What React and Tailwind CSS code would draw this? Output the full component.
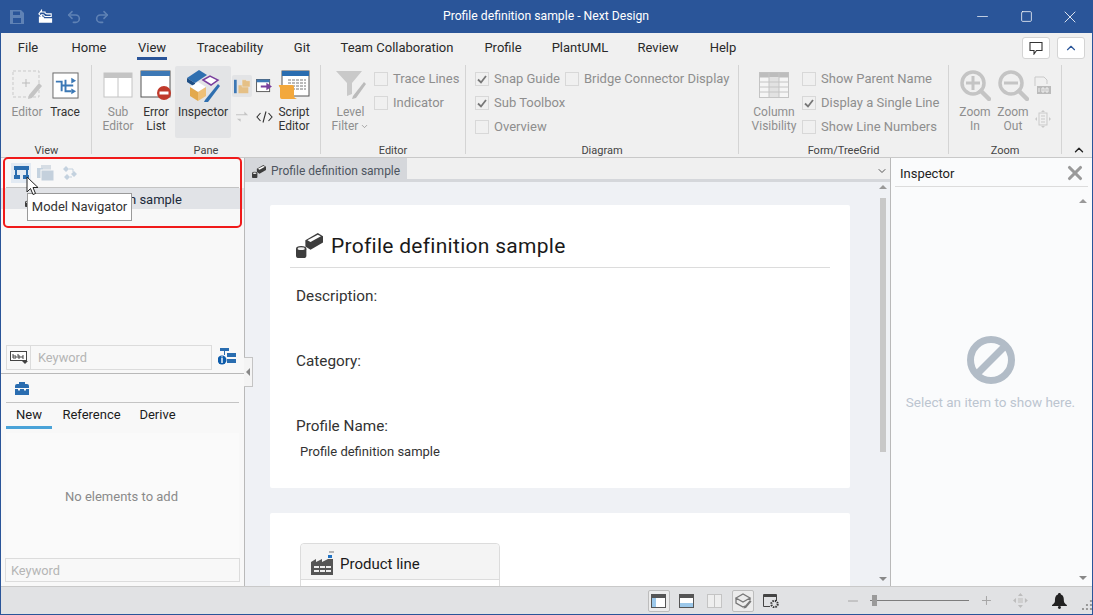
import { X, Minus, Square, ChevronUp, ChevronDown, Undo2, Redo2 } from 'lucide-react'

const tabs = [
  ['File', 'w-[54px]', false],
  ['Home', 'w-[68px]', false],
  ['View', 'w-[58px]', true],
  ['Traceability', 'w-[98px]', false],
  ['Git', 'w-[46px]', false],
  ['Team Collaboration', 'w-[144px]', false],
  ['Profile', 'w-[68px]', false],
  ['PlantUML', 'w-[86px]', false],
  ['Review', 'w-[70px]', false],
  ['Help', 'w-[60px]', false],
]

function Check({ label, checked, className = '' }) {
  return (
    <div className={`flex items-center gap-[5px] h-[24px] text-[#8e8e8e] text-[13px] whitespace-nowrap ${className}`}>
      <span className="w-[14px] h-[14px] border border-[#d8d8d8] bg-[#f0f0f0] flex items-center justify-center shrink-0">
        {checked && (
          <svg width="10" height="9" viewBox="0 0 10 9"><path d="M1 4.5 L4 7.5 L9 1" fill="none" stroke="#777" strokeWidth="1.8" /></svg>
        )}
      </span>
      {label}
    </div>
  )
}

function Group({ label, className, inner = '', children }) {
  return (
    <div className={`flex flex-col h-full border-r border-[#d4d4d4] shrink-0 ${className}`}>
      <div className={`flex-1 flex min-h-0 ${inner}`}>{children}</div>
      <div className="h-[14px] mb-[-4px] text-center text-[11px] leading-[14px] text-[#444]">{label}</div>
    </div>
  )
}

// ribbon button: 40px icon box, then one or two label lines
function Big({ icon, dim, className = '', children }) {
  return (
    <div className={`flex flex-col items-center shrink-0 ${className}`}>
      <div className="h-[40px] flex items-center justify-center">{icon}</div>
      <div className={`text-[12px] leading-[14px] text-center ${dim ? 'text-[#8e8e8e]' : 'text-[#333]'}`}>{children}</div>
    </div>
  )
}

function CubeIcon({ size = 16 }) {
  return (
    <svg width={size} height={size} viewBox="0 0 26 26">
      <path d="M9 9 L21 2 L26 5 L26 11 L14 18 L9 15 Z" fill="#3d3d3d" />
      <path d="M11 9 L21 3.5 L24 5 L14 10.5 Z" fill="#fff" />
      <ellipse cx="5" cy="17" rx="5" ry="2.5" fill="#3d3d3d" />
      <path d="M0 17 V24 A5 2.5 0 0 0 10 24 V17 Z" fill="#3d3d3d" />
      <ellipse cx="5" cy="17" rx="3.4" ry="1.4" fill="#eee" />
    </svg>
  )
}

function ArrowUp({ className = '' }) {
  return <span className={`w-0 h-0 border-x-[4px] border-x-transparent border-b-[4px] border-b-[#999] ${className}`} />
}

function ArrowDown({ className = '' }) {
  return <span className={`w-0 h-0 border-x-[4px] border-x-transparent border-t-[4px] border-t-[#888] ${className}`} />
}

function Ribbon() {
  return (
    <div className="h-[96px] flex bg-[#f0f0f0] border-b border-[#c9c9c9] pl-[1px] pt-[3px] pb-[3px] shrink-0">
      <Group label="View" className="w-[90px]">
        <Big
          dim
          className="w-[50px]"
          icon={
            <svg width="32" height="32" viewBox="0 0 32 32">
              <rect x="2" y="2" width="26" height="26" fill="none" stroke="#c9c9c9" strokeDasharray="3 2" />
              <path d="M15 10v8M11 14h8" stroke="#bbb" />
              <path d="M18 26 L28 14 L31 17 L21 29 L17 30 Z" fill="#c4c4c4" />
            </svg>
          }
        >
          Editor
        </Big>
        <Big
          className="w-[26px]"
          icon={
            <svg width="27" height="27" viewBox="0 0 28 28">
              <rect x="1" y="1" width="26" height="26" fill="#fff" stroke="#666" />
              <path d="M4 10h6v10M14 8v12h6M10 14h12" fill="none" stroke="#3b78b5" strokeWidth="2" />
              <path d="M20 6l5 3-5 3zM20 17l5 3-5 3z" fill="#3b78b5" />
            </svg>
          }
        >
          Trace
        </Big>
      </Group>
      <Group label="Pane" className="w-[229px]">
        <Big
          dim
          className="w-[50px] ml-[1px]"
          icon={
            <svg width="30" height="26" viewBox="0 0 30 26">
              <rect x="1" y="1" width="28" height="24" fill="#fff" stroke="#c4c4c4" />
              <rect x="1" y="1" width="28" height="5" fill="#c4c4c4" />
              <path d="M15 6v19" stroke="#c4c4c4" />
            </svg>
          }
        >
          Sub<br />Editor
        </Big>
        <Big
          className="w-[34px] ml-[-4px]"
          icon={
            <svg width="32" height="30" viewBox="0 0 32 30">
              <rect x="1" y="1" width="29" height="26" fill="#fff" stroke="#555" />
              <rect x="1" y="1" width="29" height="5" fill="#3d78b5" />
              <circle cx="24" cy="23" r="7" fill="#c0392b" />
              <rect x="19.5" y="21.5" width="9" height="3" fill="#fff" />
            </svg>
          }
        >
          Error<br />List
        </Big>
        <div className="w-[56px] h-[72px] ml-[2px] mt-[1px] bg-[#e3e4e6] rounded-[2px] flex flex-col items-center">
          <div className="h-[39px] flex items-center">
            <svg width="36" height="34" viewBox="0 0 36 34">
              <path d="M2 9 L14 1 L22 6 L10 14 Z" fill="#2f6fb0" />
              <path d="M2 9 L10 14 V18 L2 13 Z" fill="#1f4f85" />
              <path d="M18 11 L25 7 L33 11 L26 16 Z" fill="#fff" stroke="#7a3f9d" strokeWidth="1.5" />
              <path d="M5 18 L13 13 L21 18 L13 23 Z" fill="#fff" />
              <path d="M5 18 L13 23 V32 L5 27 Z" fill="#e3a94c" />
              <path d="M21 18 L13 23 V32 L21 27 Z" fill="#eec078" />
              <path d="M20 31 L33 15 L35 17 L23 33 L19 33 Z" fill="#2f6fb0" />
            </svg>
          </div>
          <div className="text-[12px] leading-[14px] text-[#333]">Inspector</div>
        </div>
        <div className="w-[46px] pt-[9px] flex flex-col shrink-0">
          <div className="flex items-center h-[24px] pl-[1px]">
            <span className="w-[20px] h-[22px] bg-[#e3e4e6] rounded-[2px] flex items-center justify-center">
              <svg width="17" height="17" viewBox="0 0 19 19">
                <rect x="0" y="2" width="3" height="15" fill="#3d78b5" />
                <path d="M5 8h5l1 1h5v8H5z" fill="#e5c086" />
                <path d="M9 2h4l1 1h4v7H9z" fill="#e5c086" stroke="#f0f0f0" strokeWidth=".5" />
              </svg>
            </span>
            <svg width="17" height="14" viewBox="0 0 18 15" className="ml-[4px]">
              <rect x=".5" y=".5" width="14" height="13" fill="#fff" stroke="#555" />
              <rect x=".5" y=".5" width="14" height="3" fill="#3d78b5" />
              <path d="M5 7h6V4l6 4-6 4V9H5z" fill="#7a3f9d" />
            </svg>
          </div>
          <div className="flex items-center h-[24px] mt-[7px] pl-[5px]">
            <svg width="13" height="14" viewBox="0 0 14 14"><path d="M0 4h9V1l4 4H0zM14 9H5v3L1 9h13z" fill="#c4c4c4" /></svg>
            <svg width="17" height="12" viewBox="0 0 17 12" className="ml-[7px]"><path d="M4.500 2 L1 6 L4.500 10 M12.500 2 L16 6 L12.500 10 M10 0.500 L7 11.500" fill="none" stroke="#333" strokeWidth="1.1" /></svg>
          </div>
        </div>
        <Big
          className="w-[36px] ml-[-1px]"
          icon={
            <svg width="32" height="30" viewBox="0 0 32 30">
              <rect x="4" y="1" width="27" height="25" fill="#fff" stroke="#555" />
              <rect x="4" y="1" width="27" height="5" fill="#2a6db0" />
              <path d="M10 10h18M10 13h18M10 16h18M10 19h18" stroke="#777" strokeDasharray="3 1" />
              <path d="M1 15h13c2 0 2 2 2 3v8c0 2 2 2 3 3H4c-2 0-2-2-2-3v-8c0-1-2-2-1-3z" fill="#f3a83c" />
            </svg>
          }
        >
          Script<br />Editor
        </Big>
      </Group>
      <Group label="Editor" className="w-[145px]">
        <Big
          dim
          className="w-[53px] pl-[6px]"
          icon={
            <svg width="32" height="30" viewBox="0 0 32 30">
              <path d="M1 1h26L17 13v11l-5 2V13z" fill="#c9c9c9" />
              <path d="M18 26 L29 12 L31 14 L21 28 L17 29 Z" fill="#bbb" />
            </svg>
          }
        >
          Level<br /><span className="inline-flex items-center gap-[2px]">Filter<ChevronDown size={9} /></span>
        </Big>
        <div className="flex flex-col pt-[2px]">
          <Check label="Trace Lines" />
          <Check label="Indicator" />
        </div>
      </Group>
      <Group label="Diagram" className="w-[273px]" inner="pl-[9px]">
        <div className="flex flex-col pt-[2px]">
          <div className="flex gap-[5px]">
            <Check label="Snap Guide" checked />
            <Check label="Bridge Connector Display" />
          </div>
          <Check label="Sub Toolbox" checked />
          <Check label="Overview" />
        </div>
      </Group>
      <Group label="Form/TreeGrid" className="w-[210px]" inner="pl-[9px]">
        <Big
          dim
          className="w-[52px] mr-[2px]"
          icon={
            <svg width="30" height="26" viewBox="0 0 30 26">
              <rect x=".5" y=".5" width="29" height="25" fill="#f5f5f5" stroke="#c4c4c4" />
              <rect x=".5" y=".5" width="29" height="5" fill="#bdbdbd" />
              <rect x="10" y="5" width="10" height="20" fill="#e2e2e2" />
              <path d="M10 1v24M20 1v24M1 10h28M1 15h28M1 20h28" stroke="#c4c4c4" />
            </svg>
          }
        >
          Column<br />Visibility
        </Big>
        <div className="flex flex-col pt-[2px]">
          <Check label="Show Parent Name" />
          <Check label="Display a Single Line" checked />
          <Check label="Show Line Numbers" />
        </div>
      </Group>
      <Group label="Zoom" className="w-[113px]" inner="pl-[7px]">
        {[['In', 'M8 15h14M15 8v14'], ['Out', 'M8 15h14']].map(([t, d]) => (
          <Big
            key={t}
            dim
            className="w-[38px]"
            icon={
              <svg width="32" height="32" viewBox="0 0 32 32">
                <circle cx="14" cy="14" r="11" fill="none" stroke="#c4c4c4" strokeWidth="3.5" />
                <path d={d} transform="translate(-1 -1)" stroke="#c4c4c4" strokeWidth="3" />
                <path d="M22 22l8 8" stroke="#c4c4c4" strokeWidth="4.500" strokeLinecap="round" />
              </svg>
            }
          >
            Zoom<br />{t}
          </Big>
        ))}
        <div className="flex flex-col items-center gap-[16px] pt-[11px] ml-[2px]">
          <svg width="17" height="18" viewBox="0 0 17 18">
            <path d="M1 10V1h9l3 3v4" fill="none" stroke="#c9c9c9" />
            <rect x="3" y="10" width="14" height="8" fill="#bbb" />
            <path d="M5 12v4M8 12h2v4H8zM12 12h2v4h-2z" fill="none" stroke="#f0f0f0" />
          </svg>
          <svg width="16" height="18" viewBox="0 0 16 18">
            <rect x="4" y="3" width="8" height="12" fill="none" stroke="#c9c9c9" />
            <path d="M6 6h4M6 9h4M6 12h4" stroke="#c9c9c9" />
            <path d="M2 7L0 9l2 2zM14 7l2 2-2 2zM6 2l2-2 2 2zM6 16l2 2 2-2z" fill="#c9c9c9" />
          </svg>
        </div>
      </Group>
      <div className="flex-1 flex items-end justify-end pr-[6px] mb-[-3px]"><ChevronUp size={14} strokeWidth={2.4} className="text-[#222]" /></div>
    </div>
  )
}

function LeftPanel() {
  return (
    <div className="w-[244px] shrink-0 border-r border-[#b9b9b9] bg-[#f8f8f8] flex flex-col relative">
      <div className="h-[30px] mx-[5px] flex items-center pl-[5px] border-b border-[#c4c4c4] shrink-0">
        <span className="w-[20px] h-[20px] bg-[#e2eaf3] flex items-center justify-center">
          <svg width="15" height="13" viewBox="0 0 15 13"><path d="M0 0h15v4H0zM1 4h2v5H1zM12 4h2v5h-2z" fill="#2a6db0" /><path d="M0 9h6v4H0zM9 9h6v4H9z" fill="#2a6db0" /></svg>
        </span>
        <svg width="17" height="16" viewBox="0 0 17 16" className="ml-[6px]"><rect x="4" y="0" width="10" height="9" fill="#d6dde4" /><rect x="0" y="3" width="6" height="10" fill="#c4d2df" /><rect x="4" y="5" width="13" height="11" fill="#c4d0dc" stroke="#f8f8f8" /></svg>
        <svg width="16" height="16" viewBox="0 0 16 16" className="ml-[8px]"><path d="M4 1l3 3-3 3-3-3zM12 6l3 3-3 3-3-3zM5 9l3 3-3 3-3-3z" fill="#c4d2df" /><path d="M7 4h4v3M8 12h2" stroke="#c4d2df" fill="none" /></svg>
      </div>
      <div className="h-[21px] bg-[#e1e3e7] flex items-center pl-[24px] pt-[3px] gap-[3px] text-[13px] text-[#1c2a3a] shrink-0">
        <CubeIcon size={14} />
        Profile definition sample
      </div>
      <div className="flex-1" />
      <div className="h-[25px] mx-[5px] flex gap-[6px] shrink-0">
        <div className="w-[206px] border border-[#dcdcdc] flex items-center">
          <span className="w-[24px] h-full border-r border-[#dcdcdc] flex items-center justify-center">
            <svg width="18" height="13" viewBox="0 0 18 13"><rect x=".5" y=".5" width="16" height="9" fill="#fff" stroke="#444" /><path d="M3 3v4M3 5h3v2H3M8 3v4h2V5H8M14 5h-2v2h2" fill="none" stroke="#444" /><path d="M12 10h6l-3 3z" fill="#444" /></svg>
          </span>
          <span className="pl-[7px] pt-[1px] text-[12.8px] text-[#b5b5b5]">Keyword</span>
        </div>
        <svg width="18" height="17" viewBox="0 0 18 17" className="mt-[3px]">
          <path d="M2 0h9v3H7v4H6V3H2z" fill="#2a6db0" />
          <rect x="9" y="5" width="9" height="4" fill="#2a6db0" />
          <rect x="9" y="11" width="9" height="4" fill="#2a6db0" />
          <circle cx="4" cy="12" r="4.500" fill="#0d5cab" />
          <rect x="3.300" y="10" width="1.400" height="5" fill="#fff" />
          <rect x="3.300" y="8.400" width="1.400" height="1" fill="#fff" />
        </svg>
      </div>
      <div className="h-[1px] bg-[#b9b9b9] mt-[3px] shrink-0" />
      <div className="h-[29px] mx-[5px] border-b border-[#c4c4c4] flex items-center pl-[9px] pt-[1px] shrink-0">
        <svg width="14" height="13" viewBox="0 0 14 13"><path d="M0 4Q0 2 2 2H4V0H10V2H12Q14 2 14 4V6H0z" fill="#2a6db0" /><path d="M0 7H3V8.500H5V7H9V8.500H11V7H14V13H0z" fill="#2a6db0" /></svg>
      </div>
      <div className="h-[26px] mx-[5px] flex text-[13px] text-[#1c1c1c] shrink-0">
        <div className="w-[46px] text-center leading-[23px] border-b-[3px] border-[#4aa3d8]">New</div>
        <div className="w-[79px] text-center leading-[23px]">Reference</div>
        <div className="w-[53px] text-center leading-[23px]">Derive</div>
      </div>
      <div className="h-[4px] shrink-0" />
      <div className="flex-[0_0_125px] mx-[5px] bg-[#fafafa] flex items-center justify-center pr-[2px] pt-[2px] text-[13px] text-[#8a8a8a]">No elements to add</div>
      <div className="h-[24px] mx-[4px] mb-[4px] border border-[#dcdcdc] pl-[5px] text-[12.8px] leading-[23px] text-[#b5b5b5] shrink-0">Keyword</div>

      <div className="absolute left-[26px] top-[35px] w-[105px] h-[28px] bg-white border border-[#9a9a9a] flex items-center justify-center text-[13px] text-[#333] z-10">Model Navigator</div>
      <div className="absolute left-[2px] top-[-1px] w-[239px] h-[71px] rounded-[5px] border-[2px] border-[#f01a1a] z-20" />
      <svg width="14" height="21" viewBox="0 0 14 21" className="absolute left-[25px] top-[18px] z-30">
        <path d="M1 1 V16 L4.500 12.500 L7 18.500 L9.500 17.500 L7 11.500 H12 Z" fill="#fff" stroke="#222" strokeWidth="1" />
      </svg>
      <div className="absolute left-[243px] top-[199px] w-[9px] h-[30px] bg-[#f4f4f4] border border-l-0 border-[#c4c4c4] flex items-center justify-center z-10">
        <span className="w-0 h-0 border-y-[4px] border-y-transparent border-r-[4px] border-r-[#888]" />
      </div>
    </div>
  )
}

function DocPane() {
  return (
    <div className="flex-1 min-w-0 flex flex-col bg-[#eff1f5]">
      <div className="h-[21px] flex bg-[#f0f0f0] shrink-0">
        <div className="w-[162px] bg-[#d5d7db] flex items-center pl-[7px] pt-[5px] gap-[5px] text-[12px] text-[#4d5560]">
          <CubeIcon size={14} />
          Profile definition sample
        </div>
        <div className="flex-1 flex items-center justify-end pr-[2px] pt-[4px]"><ChevronDown size={12} className="text-[#555]" /></div>
      </div>
      <div className="h-[3px] bg-[#d5d7db] shrink-0" />
      <div className="flex-1 min-h-0 flex">
        <div className="flex-1 min-w-0 pl-[25px] pr-[25px] pt-[23px] flex flex-col gap-[25px] overflow-hidden">
          <div className="h-[283px] shrink-0 bg-white rounded-[2px] px-[20px] pt-[26px]">
            <div className="h-[37px] flex items-start gap-[8px] pl-[6px] border-b border-[#dcdcdc]">
              <CubeIcon size={27} />
              <span className="text-[21px] leading-[31px] text-[#1a1a1a] tracking-[0.28px]">Profile definition sample</span>
            </div>
            <div className="pl-[6px] pt-[18px] text-[15.3px] text-[#333] leading-[20px]">
              <div className="h-[65px]">Description:</div>
              <div className="h-[65px]">Category:</div>
              <div>Profile Name:</div>
              <div className="pl-[4px] pt-[7px] text-[13px] leading-[18px] text-[#333]">Profile definition sample</div>
            </div>
          </div>
          <div className="flex-1 shrink-0 bg-white rounded-[2px] pl-[30px] pt-[30px] min-h-[80px]">
            <div className="w-[200px] h-[60px] border border-[#dcdcdc] rounded-[4px]">
              <div className="h-[36px] bg-[#f4f4f4] border-b border-[#dcdcdc] rounded-t-[4px] flex items-center pl-[9px] gap-[5px] pt-[2px] text-[15px] text-[#1a1a1a]">
                <svg width="25" height="24" viewBox="0 0 25 24">
                  <path d="M18 7h4V4h-4z" fill="#1f72c4" />
                  <path d="M19 1h5" stroke="#777" />
                  <path d="M1 24V11l5-3v3l6-3v3l6-3h5v16z" fill="#555" />
                  <path d="M4 15h5v2H4zM10 15h5v2h-5zM16 15h5v2h-5zM4 19h5v2H4zM10 19h5v2h-5zM16 19h5v2h-5z" fill="#eee" />
                </svg>
                <span className="pt-[3px]">Product line</span>
              </div>
            </div>
          </div>
        </div>
        <div className="w-[15px] flex flex-col items-center shrink-0">
          <ArrowUp className="mt-[3px]" />
          <div className="w-[6px] h-[254px] mt-[9px] bg-[#c8c8c8]" />
          <div className="flex-1" />
          <ArrowDown className="mb-[5px]" />
        </div>
      </div>
    </div>
  )
}

function InspectorPane() {
  return (
    <div className="w-[202px] shrink-0 border-l border-[#b9b9b9] bg-[#fafbfc] flex flex-col">
      <div className="h-[29px] mx-[4px] pl-[5px] pr-[2px] pt-[2px] border-b border-[#dcdcdc] flex items-center justify-between text-[13px] text-[#222] shrink-0">
        <span className="pt-[1px]">Inspector</span>
        <X size={22} strokeWidth={3.4} className="text-[#9a9a9a]" />
      </div>
      <div className="h-[16px] flex justify-end pr-[5px] items-end shrink-0"><ArrowUp /></div>
      <div className="flex-1 flex flex-col items-center pt-[133px] pr-[2px]">
        <svg width="48" height="48" viewBox="0 0 48 48">
          <circle cx="24" cy="24" r="20.500" fill="none" stroke="#b2bcc7" strokeWidth="7" />
          <path d="M10 38 L38 10" stroke="#b2bcc7" strokeWidth="7" />
        </svg>
        <div className="mt-[8px] text-[13.5px] text-[#bcc5d0] whitespace-nowrap">Select an item to show here.</div>
      </div>
      <div className="h-[10px] flex justify-end pr-[5px] shrink-0"><ArrowDown /></div>
    </div>
  )
}

function StatusBar() {
  return (
    <div className="h-[28px] bg-[#e1e2e4] border-t border-[#c9c9c9] flex items-center shrink-0 pl-[647px]">
      <span className="w-[22px] h-[22px] border border-[#bdbdbd] bg-[#ececec] rounded-[2px] flex items-center justify-center">
        <svg width="15" height="14" viewBox="0 0 15 14"><rect x=".5" y=".5" width="14" height="13" fill="#fff" stroke="#555" /><rect x="1" y="1" width="13" height="3" fill="#555" /><rect x="1" y="4" width="4" height="9" fill="#9cc8ea" /></svg>
      </span>
      <span className="w-[20px] ml-[7px] flex justify-center">
        <svg width="15" height="14" viewBox="0 0 15 14"><rect x=".5" y=".5" width="14" height="13" fill="#fff" stroke="#555" /><rect x="1" y="1" width="13" height="3" fill="#555" /><rect x="1" y="9" width="13" height="4" fill="#9cc8ea" /></svg>
      </span>
      <span className="w-[20px] ml-[8px] flex justify-center">
        <svg width="15" height="14" viewBox="0 0 15 14"><rect x=".5" y=".5" width="14" height="13" fill="#eee" stroke="#c4c4c4" /><path d="M7.500 1v12" stroke="#c4c4c4" /></svg>
      </span>
      <span className="w-[22px] h-[22px] ml-[8px] border border-[#bdbdbd] bg-[#ececec] rounded-[2px] flex items-center justify-center">
        <svg width="17" height="16" viewBox="0 0 17 16"><path d="M1 5 L8 1 L15 5 L8 9 Z M1 5 V10 L8 14 L10 13 M15 5 V7" fill="none" stroke="#777" strokeWidth="1.3" /><path d="M9 14 L15 7 L16.500 8.500 L11 15 L8.500 15.500 Z" fill="#777" /></svg>
      </span>
      <span className="w-[16px] ml-[9px] flex justify-center">
        <svg width="16" height="14" viewBox="0 0 16 14"><path d="M13.500 7V.5H.5v12H7" fill="none" stroke="#444" /><rect x="1" y="1" width="13" height="2" fill="#444" /><circle cx="11.500" cy="10" r="3.200" fill="none" stroke="#333" strokeWidth="2" strokeDasharray="1.500 1" /></svg>
      </span>
      <svg width="10" height="10" viewBox="0 0 10 10" className="ml-[69px]"><path d="M0 5h10" stroke="#a5a5a5" /></svg>
      <div className="w-[100px] ml-[12px] h-[1px] bg-[#7d7d7d] relative">
        <span className="absolute left-[2px] top-[-5px] w-[5px] h-[11px] bg-[#9a9a9a]" />
      </div>
      <svg width="11" height="11" viewBox="0 0 11 11" className="ml-[12px]"><path d="M5.500 1v9M1 5.500h9" stroke="#a5a5a5" /></svg>
      <svg width="15" height="15" viewBox="0 0 15 15" className="ml-[21px]"><path d="M7.500 0l2.500 3H5zM7.500 15l2.500-3H5zM0 7.500L3 5v5zM15 7.500L12 5v5z" fill="#bdbdbd" /><rect x="5" y="5" width="5" height="5" fill="#cfcfcf" /></svg>
      <svg width="15" height="16" viewBox="0 0 15 16" className="ml-[24px]"><path d="M7.500 0c1 0 1.500.7 1.500 1.400C12 2.300 12 6 12 8c0 2 1.500 3 3 4v1H0v-1c1.500-1 3-2 3-4 0-2 0-5.700 3-6.600C6 .7 6.500 0 7.500 0z" fill="#222" /><circle cx="7.500" cy="14.500" r="1.500" fill="#222" /></svg>
      <svg width="10" height="10" viewBox="0 0 10 10" className="ml-[15px] mt-[8px]"><path d="M8 0h2v2H8zM4 4h2v2H4zM8 4h2v2H8zM0 8h2v2H0zM4 8h2v2H4zM8 8h2v2H8z" fill="#999" /></svg>
    </div>
  )
}

export default function App() {
  return (
    <div className="w-[1093px] h-[615px] flex flex-col overflow-hidden bg-[#f0f0f0] border-x border-b border-[#2a5599] font-['Roboto','Liberation_Sans',sans-serif]">
      <div className="h-[33px] mx-[-1px] bg-[#2a5599] flex items-center shrink-0">
        <div className="flex items-center pl-[10px]">
          <svg width="14" height="14" viewBox="0 0 14 14"><path d="M0 0h11l3 3v11H0z" fill="#5f82b5" /><path d="M3 1.500h7v3.500H3zM3 8h8v5H3z" fill="#2a5599" /></svg>
          <svg width="15" height="15" viewBox="0 0 17 16" className="ml-[14px]"><path d="M1 8h5l1 2h9v5H1z" fill="#fff" /><path d="M1 5l3-4v2h4v1l2 1h5v3H8L6 6H4v2z" fill="none" stroke="#fff" strokeWidth="1.200" /></svg>
          <Undo2 size={16} strokeWidth={2.4} className="ml-[13px] text-[#5f82b5]" />
          <Redo2 size={16} strokeWidth={2.4} className="ml-[12px] text-[#5f82b5]" />
        </div>
        <div className="flex-1 text-center text-[12.2px] text-white pl-[29px] pr-[7px]">Profile definition sample - Next Design</div>
        <div className="flex items-center text-white pr-[1px]">
          <div className="w-[44px] flex justify-center"><Minus size={17} strokeWidth={1} /></div>
          <div className="w-[44px] flex justify-center"><Square size={13} strokeWidth={1.4} /></div>
          <div className="w-[44px] flex justify-center"><X size={20} strokeWidth={1} /></div>
        </div>
      </div>
      <div className="h-[29px] flex items-stretch bg-[#f0f0f0] shrink-0 text-[13px] text-[#2a2a2a]">
        {tabs.map(([t, w, on]) => (
          <div key={t} className={`${w} flex flex-col items-center pt-[6px] shrink-0`}>
            <span className="leading-[17px]">{t}</span>
            {on && <span className="w-[30px] h-[3px] bg-[#2a5599] mt-[1px]" />}
          </div>
        ))}
        <div className="flex-1 flex justify-end items-start pt-[4px] pr-[7px] gap-[7px]">
          <span className="w-[28px] h-[22px] bg-white border border-[#d4d4d4] rounded-[3px] flex items-center justify-center">
            <svg width="14" height="13" viewBox="0 0 14 13"><path d="M1 .5h12v8H7.500L5 12V8.500H1z" fill="none" stroke="#333" strokeWidth="1.100" /></svg>
          </span>
          <span className="w-[28px] h-[22px] bg-white border border-[#d4d4d4] rounded-[3px] flex items-center justify-center">
            <ChevronUp size={14} className="text-[#2a5599]" />
          </span>
        </div>
      </div>
      <Ribbon />
      <div className="flex-1 min-h-0 flex">
        <LeftPanel />
        <DocPane />
        <InspectorPane />
      </div>
      <StatusBar />
    </div>
  )
}
